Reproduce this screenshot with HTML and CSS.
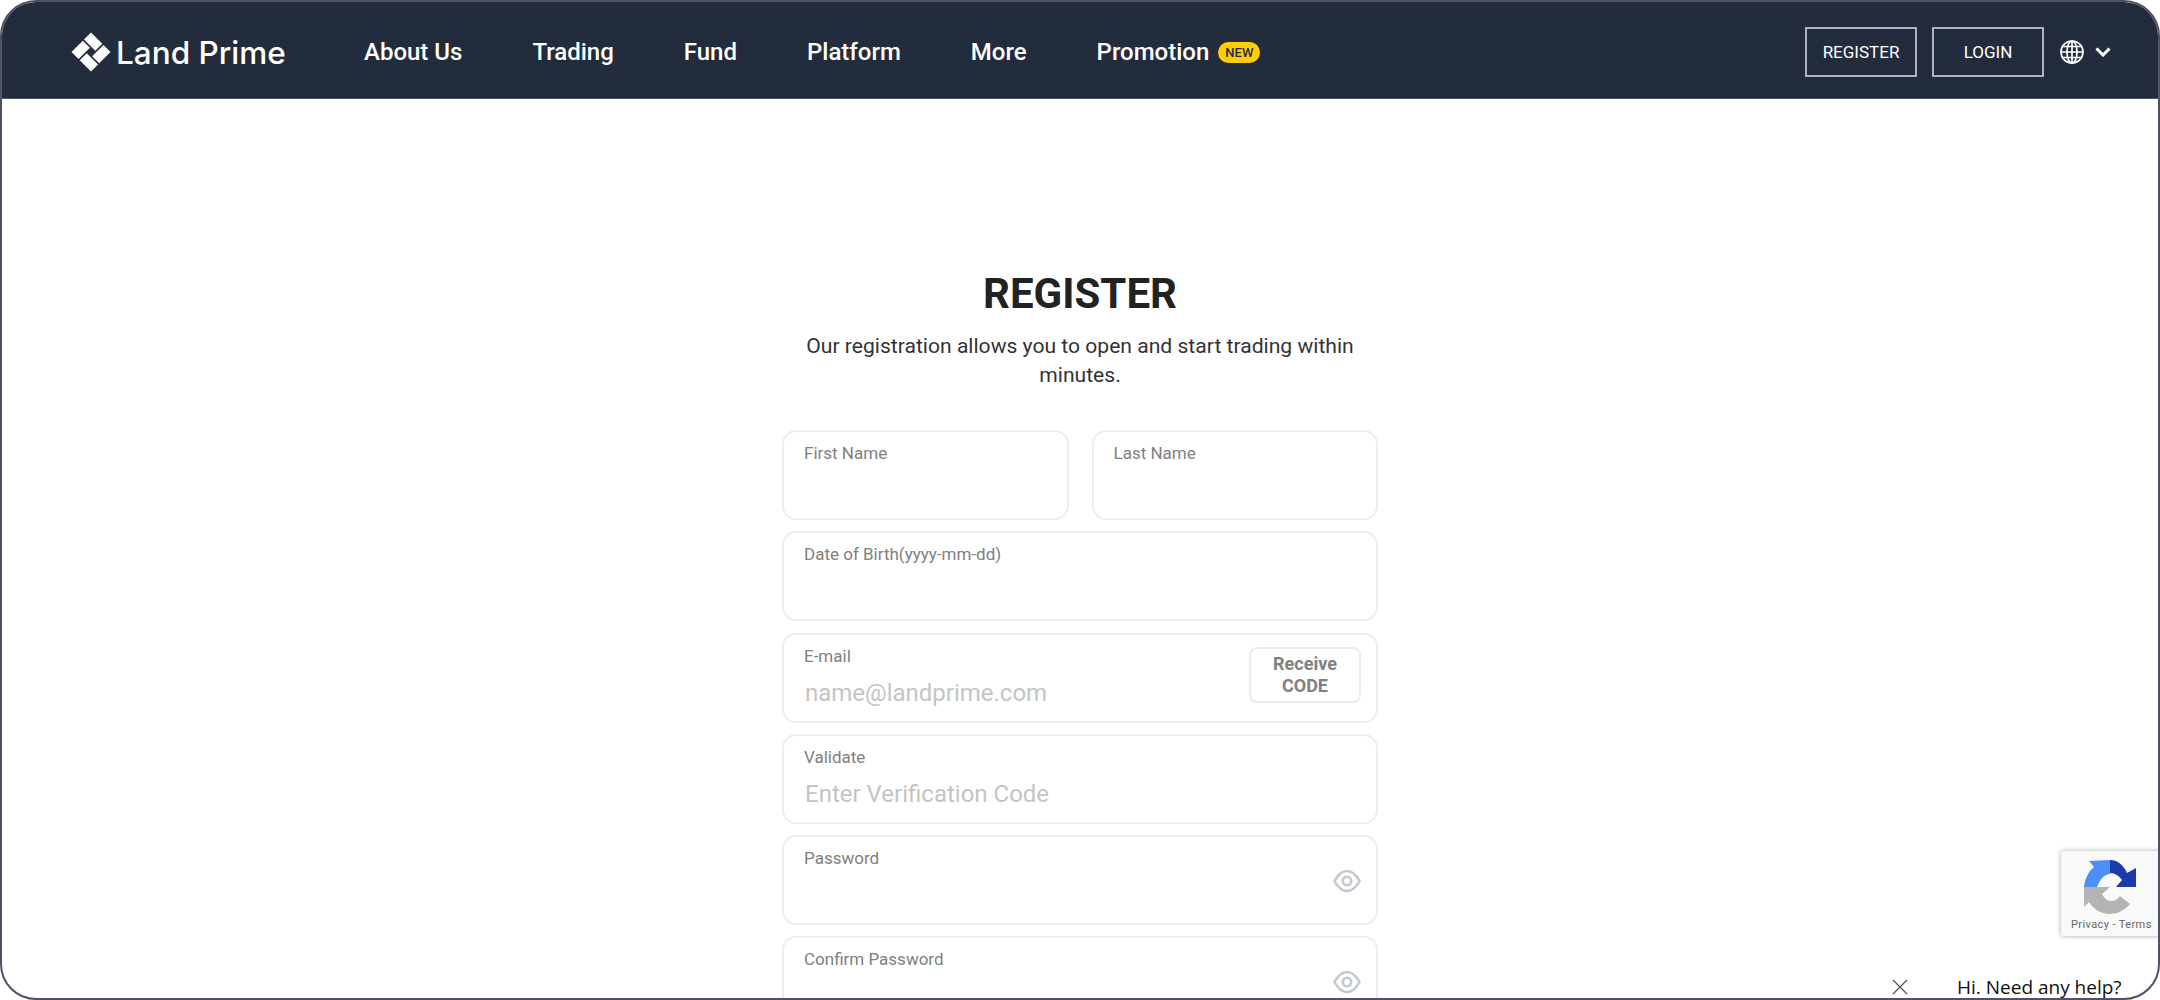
FILE: index.html
```html
<!DOCTYPE html>
<html lang="en">
  <head>
    <meta charset="UTF-8" />
    <title>Land Prime - Register</title>
    <link rel="stylesheet" href="styles.css">
  </head>
  <body>
    <div class="frame">

      <!-- Navbar -->
      <div class="navbar">
        <div class="logo">
          <svg class="logo-mark" viewBox="0 0 40 40" width="40" height="40">
            <g fill="#fff" transform="rotate(45 20 20)">
              <rect x="6.2" y="6.2" width="16" height="10" />
              <rect x="23.8" y="6.2" width="10" height="16" />
              <rect x="17.8" y="23.8" width="16" height="10" />
              <rect x="6.2" y="17.8" width="10" height="16" />
            </g>
          </svg>
          <span class="logo-text">Land Prime</span>
        </div>
        <div class="menu">
          <a href="#">About Us</a>
          <a href="#">Trading</a>
          <a href="#">Fund</a>
          <a href="#">Platform</a>
          <a href="#">More</a>
          <a href="#">Promotion<span class="badge">NEW</span></a>
        </div>
        <div class="actions">
          <a class="btn-outline" href="#">REGISTER</a>
          <a class="btn-outline" href="#">LOGIN</a>
          <svg class="globe" viewBox="0 0 24 24" width="24" height="24" fill="none" stroke="#fff" stroke-width="1.7">
            <circle cx="12" cy="12" r="11" />
            <ellipse cx="12" cy="12" rx="5" ry="11" />
            <path d="M12 1v22M1 12h22M2.6 6.5h18.8M2.6 17.5h18.8" />
          </svg>
          <svg class="chevron" viewBox="0 0 16 10" width="16" height="10" fill="none" stroke="#fff" stroke-width="3">
            <path d="M1.5 1.5 L8 8 L14.5 1.5" />
          </svg>
        </div>
      </div>

      <!-- Content -->
      <div class="main">
        <h1>REGISTER</h1>
        <p class="intro">Our registration allows you to open and start trading within minutes.</p>

        <form class="form">
          <div class="row">
            <div class="field">
              <label>First Name</label>
              <input type="text" />
            </div>
            <div class="field">
              <label>Last Name</label>
              <input type="text" />
            </div>
          </div>
          <div class="field">
            <label>Date of Birth(yyyy-mm-dd)</label>
            <input type="text" />
          </div>
          <div class="field">
            <label>E-mail</label>
            <input type="text" placeholder="name@landprime.com" />
            <button class="code-btn" type="button">Receive CODE</button>
          </div>
          <div class="field">
            <label>Validate</label>
            <input type="text" placeholder="Enter Verification Code" />
          </div>
          <div class="field">
            <label>Password</label>
            <input type="password" />
            <svg class="eye" viewBox="0 0 28 24" width="28" height="24" fill="none" stroke="#c3c7ce" stroke-width="2.6">
              <path d="M1.5 12 C5 5.5 9 2 14 2 C19 2 23 5.5 26.5 12 C23 18.5 19 22 14 22 C9 22 5 18.5 1.5 12 Z" />
              <circle cx="14" cy="12" r="4.2" />
            </svg>
          </div>
          <div class="field">
            <label>Confirm Password</label>
            <input type="password" />
            <svg class="eye" viewBox="0 0 28 24" width="28" height="24" fill="none" stroke="#c3c7ce" stroke-width="2.6">
              <path d="M1.5 12 C5 5.5 9 2 14 2 C19 2 23 5.5 26.5 12 C23 18.5 19 22 14 22 C9 22 5 18.5 1.5 12 Z" />
              <circle cx="14" cy="12" r="4.2" />
            </svg>
          </div>
        </form>
      </div>

      <!-- reCAPTCHA badge -->
      <div class="recaptcha">
        <svg viewBox="0 0 54 54" width="54" height="54">
          <path fill="#4a90f5" d="M26 0 L26 14 C21 14 16 19 13 27 L0 27 C1 18 5 11 10 7 L5 1 Z" />
          <path fill="#1c3aa9" d="M26 0 C33 0 39 4 43 13 L52 8 L52 27 L32 27 L38 20 C35 16 31 13 26 13 Z" />
          <path fill="#b4b4b4" d="M0 27 L26 27 L18 34 C20 38 23 41 27 41 C31 41 34 39 36 36 L46 44 C41 50 34 54 26 54 C17 54 9 49 5 42 L0 47 Z" />
        </svg>
        <div class="recaptcha-links">Privacy - Terms</div>
      </div>

      <!-- Chat prompt -->
      <div class="chat">
        <svg class="chat-close" viewBox="0 0 16 16" width="16" height="16" fill="none" stroke="#555" stroke-width="1.3">
          <path d="M1 1 L15 15 M15 1 L1 15" />
        </svg>
        <span class="chat-text">Hi. Need any help?</span>
      </div>

    </div>
  </body>
</html>
```

FILE: styles.css
```css
* {
  box-sizing: border-box;
}

body {
  margin: 0;
  background-color: #fff;
  font-family: Roboto, Arial, sans-serif;
}

.frame {
  position: relative;
  height: 1000px;
  border: 2px solid #4d5364;
  border-radius: 36px;
  overflow: hidden;
  background-color: #fff;
}

.navbar {
  height: 97px;
  padding: 4px 47px 0 69px;
  background-color: #222c3c;
  border-bottom: 1px solid #4d5364;
  color: #fff;
  display: flex;
  align-items: center;
}

.logo {
  width: 293px;
  display: flex;
  align-items: center;
  gap: 5px;
}

.logo-text {
  font-family: Inter, sans-serif;
  font-size: 31.5px;
  font-weight: 500;
}

.menu {
  display: flex;
  align-items: center;
  gap: 70px;
}

.menu a {
  color: #fff;
  text-decoration: none;
  font-size: 24px;
  font-weight: 500;
  display: flex;
  align-items: center;
}

.badge {
  margin-left: 9px;
  padding: 0 7px;
  height: 21px;
  line-height: 21px;
  border-radius: 11px;
  background-color: #ffcd00;
  color: #222c3c;
  font-size: 13px;
  font-weight: 500;
}

.actions {
  margin-left: auto;
  display: flex;
  align-items: center;
}

.btn-outline {
  width: 112px;
  height: 50px;
  margin-right: 15px;
  border: 2px solid #aeb2ba;
  color: #fff;
  text-decoration: none;
  font-size: 17px;
  display: flex;
  align-items: center;
  justify-content: center;
}

.btn-outline + .btn-outline {
  margin-right: 16px;
}

.chevron {
  margin-left: 11px;
}

.main {
  width: 596px;
  margin: 0 auto;
  padding-top: 170px;
}

.main h1 {
  margin: 0;
  text-align: center;
  font-size: 42px;
  line-height: 50px;
  font-weight: 700;
  color: #222;
}

.intro {
  margin: 13px 0 0;
  text-align: center;
  font-size: 21.1px;
  line-height: 28.5px;
  color: #333;
}

.form {
  margin-top: 41px;
  display: flex;
  flex-direction: column;
  gap: 11.3px;
}

.row {
  display: flex;
  gap: 23px;
}

.row .field {
  flex: 1;
}

.field {
  position: relative;
  height: 90px;
  padding: 11px 20px 0;
  border: 2px solid #eeeeee;
  border-radius: 14px;
}

.field label {
  display: block;
  font-size: 17px;
  line-height: 20px;
  color: #808080;
}

.field input {
  width: 100%;
  height: 40px;
  margin-top: 7px;
  padding: 0 1px;
  border: none;
  outline: none;
  background: none;
  font-family: inherit;
  font-size: 24px;
}

.field input::placeholder {
  color: #c4c4c4;
}

.code-btn {
  position: absolute;
  right: 15px;
  top: 12px;
  width: 112px;
  height: 56px;
  padding: 0 20px;
  border: 2px solid #ececec;
  border-radius: 8px;
  background: #fff;
  color: #808080;
  font-family: inherit;
  font-size: 18px;
  line-height: 22px;
  font-weight: 700;
}

.eye {
  position: absolute;
  right: 15px;
  top: 32px;
}

.recaptcha {
  position: absolute;
  left: 2059px;
  top: 849px;
  width: 256px;
  height: 85px;
  padding: 9px 0 0 23px;
  background-color: #f9f9f9;
  border-radius: 3px;
  box-shadow: 0 0 5px rgba(0, 0, 0, 0.35);
}

.recaptcha svg {
  display: block;
}

.recaptcha-links {
  margin: 5px 0 0 -13px;
  font-size: 11px;
  line-height: 12px;
  letter-spacing: 0.4px;
  white-space: nowrap;
  color: #666;
}

.chat {
  position: absolute;
  left: 1890px;
  top: 974px;
  display: flex;
  align-items: center;
  height: 22px;
}

.chat-text {
  margin-left: 49px;
  font-family: "Open Sans", sans-serif;
  font-size: 19px;
  line-height: 22px;
  color: #111;
}
```
